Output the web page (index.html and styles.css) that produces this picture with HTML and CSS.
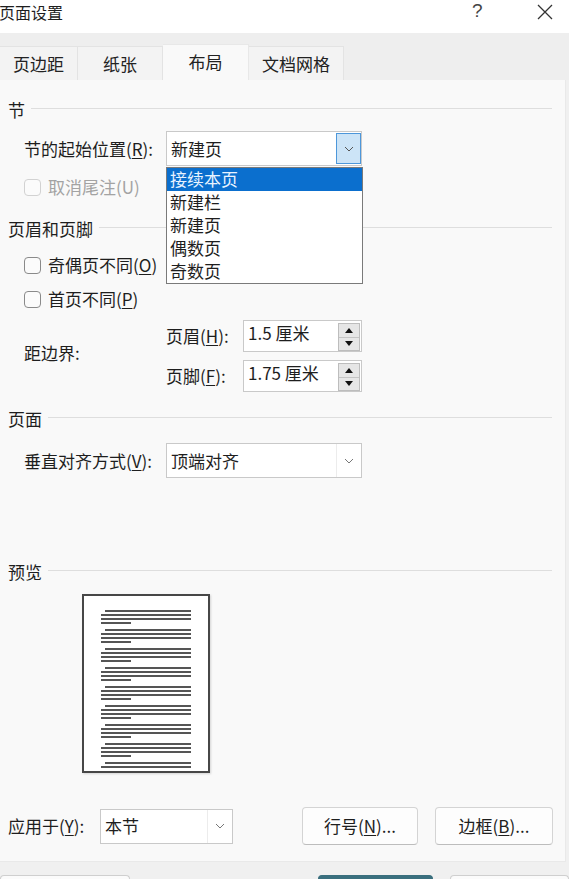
FILE: index.html
```html
<!DOCTYPE html>
<html lang="zh-CN">
<head>
<meta charset="utf-8">
<title>页面设置</title>
<link rel="stylesheet" href="styles.css">
</head>
<body>
<div class="titlebar">
  <span class="title">页面设置</span>
  <span class="help">?</span>
  <svg class="close" viewBox="0 0 16 16" width="16" height="16"><path d="M1 1L15 15M15 1L1 15" stroke="#333" stroke-width="1.3" fill="none"/></svg>
</div>
<div class="tabstrip">
  <div class="tab t1">页边距</div>
  <div class="tab t2">纸张</div>
  <div class="tab t3 active">布局</div>
  <div class="tab t4">文档网格</div>
</div>
<div class="panel">
  <div class="group g-section"><span>节</span><i class="rule"></i></div>
  <div class="row r-start">
    <span class="label">节的起始位置(<u>R</u>):</span>
    <div class="select wide">
      <span class="value">新建页</span>
      <span class="sbtn hot"><svg viewBox="0 0 10 6" width="10" height="6"><path d="M1 1L5 5L9 1" stroke="#555" stroke-width="1" fill="none"/></svg></span>
      <div class="listbox">
        <div class="item sel">接续本页</div>
        <div class="item">新建栏</div>
        <div class="item">新建页</div>
        <div class="item">偶数页</div>
        <div class="item">奇数页</div>
      </div>
    </div>
  </div>
  <div class="check disabled r-endnote"><span class="box"></span><span>取消尾注(U)</span></div>
  <div class="group g-hf"><span>页眉和页脚</span><i class="rule"></i></div>
  <div class="check r-odd"><span class="box"></span><span>奇偶页不同(<u>O</u>)</span></div>
  <div class="check r-first"><span class="box"></span><span>首页不同(<u>P</u>)</span></div>
  <div class="margins">
    <span class="margins-label">距边界:</span>
    <div class="spins">
      <div class="spin-row">
        <span class="spin-label">页眉(<u>H</u>):</span>
        <div class="spin"><span class="value">1.5 厘米</span><span class="arrows"><span class="up"><i></i></span><span class="down"><i></i></span></span></div>
      </div>
      <div class="spin-row">
        <span class="spin-label">页脚(<u>F</u>):</span>
        <div class="spin"><span class="value">1.75 厘米</span><span class="arrows"><span class="up"><i></i></span><span class="down"><i></i></span></span></div>
      </div>
    </div>
  </div>
  <div class="group g-page"><span>页面</span><i class="rule"></i></div>
  <div class="row r-valign">
    <span class="label">垂直对齐方式(<u>V</u>):</span>
    <div class="select wide">
      <span class="value">顶端对齐</span>
      <span class="sbtn"><svg viewBox="0 0 10 6" width="10" height="6"><path d="M1 1L5 5L9 1" stroke="#777" stroke-width="1" fill="none"/></svg></span>
    </div>
  </div>
  <div class="group g-preview"><span>预览</span><i class="rule"></i></div>
  <div class="preview-wrap">
    <div class="page">
      <div class="para"><i class="ln ind"></i><i class="ln"></i><i class="ln"></i><i class="ln short"></i></div>
      <div class="para"><i class="ln ind"></i><i class="ln"></i><i class="ln"></i><i class="ln short"></i></div>
      <div class="para"><i class="ln ind"></i><i class="ln"></i><i class="ln"></i><i class="ln short"></i></div>
      <div class="para"><i class="ln ind"></i><i class="ln"></i><i class="ln"></i><i class="ln short"></i></div>
      <div class="para"><i class="ln ind"></i><i class="ln"></i><i class="ln"></i><i class="ln short"></i></div>
      <div class="para"><i class="ln ind"></i><i class="ln"></i><i class="ln"></i><i class="ln short"></i></div>
      <div class="para"><i class="ln ind"></i><i class="ln"></i><i class="ln"></i><i class="ln short"></i></div>
      <div class="para"><i class="ln ind"></i><i class="ln"></i><i class="ln"></i><i class="ln short"></i></div>
      <div class="para"><i class="ln ind"></i><i class="ln"></i></div>
    </div>
  </div>
  <div class="apply-row">
    <span class="apply-label">应用于(<u>Y</u>):</span>
    <div class="select narrow">
      <span class="value">本节</span>
      <span class="sbtn plain"><svg viewBox="0 0 10 6" width="10" height="6"><path d="M1 1L5 5L9 1" stroke="#777" stroke-width="1" fill="none"/></svg></span>
    </div>
    <button class="btn b-line">行号(<u>N</u>)...</button>
    <button class="btn b-border">边框(<u>B</u>)...</button>
  </div>
</div>
<div class="footer">
  <span class="fbtn f1"></span>
  <span class="fbtn f2"></span>
  <span class="fbtn f3"></span>
</div>
</body>
</html>
```
FILE: styles.css
```css
* { box-sizing: border-box; }
html, body { margin: 0; padding: 0; }
body {
  width: 569px;
  height: 879px;
  overflow: hidden;
  background: #f0f0f0;
  font-family: "Noto Sans CJK SC", "Microsoft YaHei", sans-serif;
  font-size: 17px;
  line-height: 20px;
  color: #1e1e1e;
}
u { text-decoration: underline; text-underline-offset: 2px; text-decoration-thickness: 1px; }

.titlebar {
  height: 33px;
  background: #ffffff;
  display: flex;
  align-items: flex-start;
}
.title { margin-left: -1px; margin-top: 2px; font-size: 16px; }
.help {
  margin-left: auto;
  margin-top: 1px;
  width: 10px;
  font-family: "Liberation Sans", sans-serif;
  font-size: 19px;
  color: #444;
}
.close { margin-left: 55px; margin-right: 16px; margin-top: 4px; }

.tabstrip {
  height: 47px;
  background: #eeeeee;
  display: flex;
  align-items: flex-end;
}
.tab {
  height: 34px;
  display: flex;
  align-items: center;
  justify-content: center;
  background: #f3f3f3;
  border-top: 1px solid #e3e3e3;
  border-right: 1px solid #e3e3e3;
  color: #222;
}
.t1 { width: 78px; }
.t2 { width: 85px; }
.t3 { width: 86px; }
.t4 { width: 95px; }
.tab.active { height: 36px; background: #f9f9f9; border-color: #e8e8e8; padding-bottom: 1px; }

.panel {
  width: 566px;
  height: 782px;
  background: #f9f9f9;
  border-right: 1px solid #e9e9e9;
  border-bottom: 1px solid #e9e9e9;
  padding-top: 20px;
  overflow: hidden;
}

.group {
  display: flex;
  align-items: center;
  height: 20px;
  padding-left: 8px;
  padding-right: 13px;
}
.rule { flex: 1; height: 1px; background: #dedede; margin-left: 6px; margin-top: -3px; }
.g-hf { margin-top: 22px; }
.g-page { margin-top: 17px; }
.g-preview { margin-top: 84px; }

.row { display: flex; align-items: center; padding-left: 24px; }
.r-start { margin-top: 11px; }
.r-valign { margin-top: 14px; }
.label { width: 142px; flex-shrink: 0; }

.select {
  position: relative;
  height: 35px;
  background: #fff;
  border: 1px solid #c9c9c9;
  display: flex;
  align-items: center;
  padding-left: 4px;
  flex-shrink: 0;
}
.select.wide { width: 196px; }
.select.narrow { width: 133px; }
.sbtn {
  margin-left: auto;
  width: 25px;
  height: 33px;
  display: flex;
  align-items: center;
  justify-content: center;
  border-left: 1px solid #ececec;
}
.sbtn.hot {
  height: 31px;
  background: #cce4f7;
  border: 1px solid #4d97da;
}
.listbox {
  position: absolute;
  top: calc(100% + 2px);
  left: -1px;
  width: 197px;
  background: #fff;
  border: 1px solid #7a7a7a;
  z-index: 2;
}
.item { height: 23px; line-height: 22px; padding-left: 3px; color: #1e1e1e; }
.item.sel { background: #0b6fce; color: #e8f3ff; }

.check { display: flex; align-items: center; height: 20px; padding-left: 24px; }
.box {
  flex-shrink: 0;
  width: 17px;
  height: 17px;
  border: 1px solid #8a8a8a;
  border-radius: 4px;
  background: #fbfbfb;
  margin-right: 7px;
}
.check.disabled { color: #a3a3a3; }
.check.disabled .box { border-color: #d2d2d2; }
.r-endnote { margin-top: 11px; }
.r-odd { margin-top: 16px; }
.r-first { margin-top: 14px; }

.margins { display: flex; padding-left: 24px; margin-top: 11px; }
.margins-label { width: 142px; align-self: center; margin-top: -6px; }
.spins { display: flex; flex-direction: column; gap: 8px; }
.spin-row { display: flex; align-items: center; }
.spin-label { width: 77px; }
.spin {
  width: 119px;
  height: 32px;
  background: #fff;
  border: 1px solid #c9c9c9;
  display: flex;
  align-items: flex-start;
  padding-left: 4px;
  padding-top: 2px;
}
.arrows {
  margin-left: auto;
  margin-right: 1px;
  margin-top: 0;
  width: 22px;
  height: 28px;
  display: flex;
  flex-direction: column;
  border: 1px solid #bdbdbd;
  background: #e6e6e6;
}
.arrows .up, .arrows .down {
  flex: 1;
  display: flex;
  align-items: center;
  justify-content: center;
}
.arrows .up { border-bottom: 1px solid #c4c4c4; }
.arrows .up i {
  width: 0; height: 0;
  border-left: 4px solid transparent;
  border-right: 4px solid transparent;
  border-bottom: 5px solid #111;
}
.arrows .down i {
  width: 0; height: 0;
  border-left: 4px solid transparent;
  border-right: 4px solid transparent;
  border-top: 5px solid #111;
}

.preview-wrap { padding-left: 82px; margin-top: 12px; }
.page {
  width: 128px;
  height: 179px;
  background: #fff;
  border: 2px solid #474747;
  box-shadow: 1px 1px 2px rgba(0,0,0,0.15);
  padding: 14px 0 0 17px;
  display: flex;
  flex-direction: column;
  gap: 5px;
}
.para { display: flex; flex-direction: column; gap: 2px; }
.ln { display: block; height: 2px; width: 90px; background: #555; }
.ln.ind { width: 86px; margin-left: 4px; }
.ln.short { width: 30px; }

.apply-row { display: flex; align-items: center; margin-top: 34px; padding-left: 8px; height: 38px; }
.apply-label { width: 92px; }
.btn {
  height: 38px;
  font-family: inherit;
  font-size: 17px;
  line-height: 20px;
  color: #1e1e1e;
  background: #fdfdfd;
  border: 1px solid #d4d4d4;
  border-bottom-color: #bdbdbd;
  border-radius: 4px;
  padding: 0;
}
.b-line { width: 116px; margin-left: 69px; }
.b-border { width: 118px; margin-left: 17px; }

.footer { height: 17px; display: flex; align-items: flex-end; }
.fbtn {
  height: 4px;
  background: #fbfbfb;
  border: 1px solid #cfcfcf;
  border-bottom: none;
  border-radius: 4px 4px 0 0;
}
.f1 { width: 130px; }
.f2 { width: 115px; margin-left: 188px; background: #3a6f7e; border-color: #3a6f7e; }
.f3 { width: 119px; margin-left: 17px; }
```
